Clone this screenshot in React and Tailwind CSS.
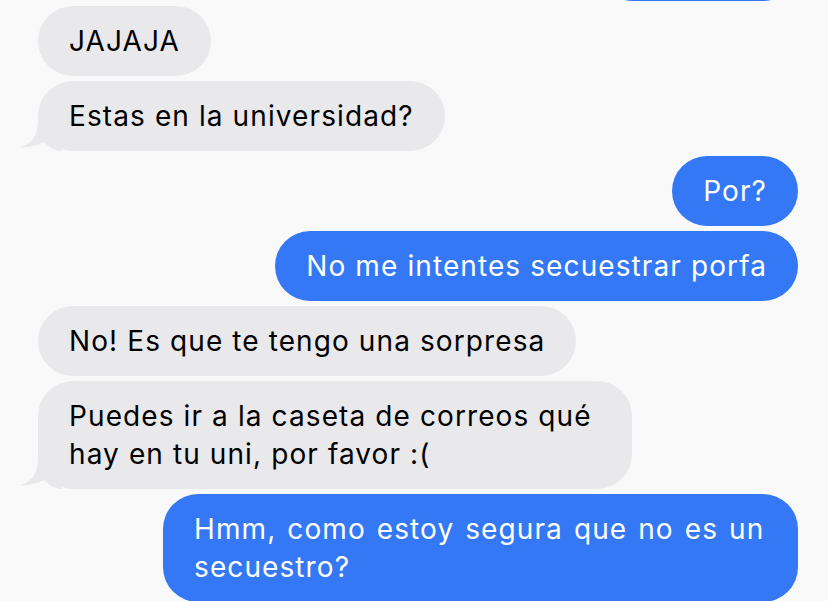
import React from 'react';

const messages = [
  { from: 'them', text: ['JAJAJA'] },
  { from: 'them', text: ['Estas en la universidad?'], tail: true },
  { from: 'me', text: ['Por?'] },
  { from: 'me', text: ['No me intentes secuestrar porfa'] },
  { from: 'them', text: ['No! Es que te tengo una sorpresa'] },
  { from: 'them', text: ['Puedes ir a la caseta de correos qué', 'hay en tu uni, por favor :('], tail: true, width: 'w-[594px]' },
  { from: 'me', text: ['Hmm, como estoy segura que no es un', 'secuestro?'], width: 'w-[635px]', wide: true },
];

// little curl at the bottom-left of the last gray bubble in a group
const Tail = () => (
  <svg
    className="absolute left-[-20px] bottom-0"
    width="48"
    height="35"
    viewBox="0 0 48 35"
  >
    <path
      d="M20 3 C20 20 14 28 2 31 C10 32 18 30 26 26 C30 30 36 35 44 35 L44 3 Z"
      fill="#e9e9eb"
    />
  </svg>
);

const Bubble = ({ msg }) => {
  const mine = msg.from === 'me';
  return (
    <div className={`flex ${mine ? 'justify-end' : 'justify-start'}`}>
      <div
        className={`relative rounded-[35px] px-[31px] py-[16px] text-[28px] leading-[38px] tracking-[1.1px] ${
          mine ? 'bg-[#3478f6] text-white' : 'bg-[#e9e9eb] text-black'
        } ${msg.width || ''}`}
      >
        {msg.tail && <Tail />}
        <p className={`relative whitespace-nowrap ${msg.wide ? '[word-spacing:2px]' : ''}`}>
          {msg.text.map((line, i) => (
            <React.Fragment key={i}>
              {i > 0 && <br />}
              {line}
            </React.Fragment>
          ))}
        </p>
      </div>
    </div>
  );
};

export default function App() {
  return (
    <div className="h-[601px] w-full overflow-hidden bg-[#f9f9f9] font-['Inter',sans-serif]">
      <div className="flex flex-col gap-[5px] pl-[38px] pr-[30px]">
        {/* previous message, scrolled almost out of view */}
        <div className="flex justify-end mt-[-69px]">
          <div className="h-[70px] w-[200px] rounded-[35px] bg-[#3478f6]" />
        </div>
        {messages.map((m, i) => (
          <Bubble key={i} msg={m} />
        ))}
      </div>
    </div>
  );
}
